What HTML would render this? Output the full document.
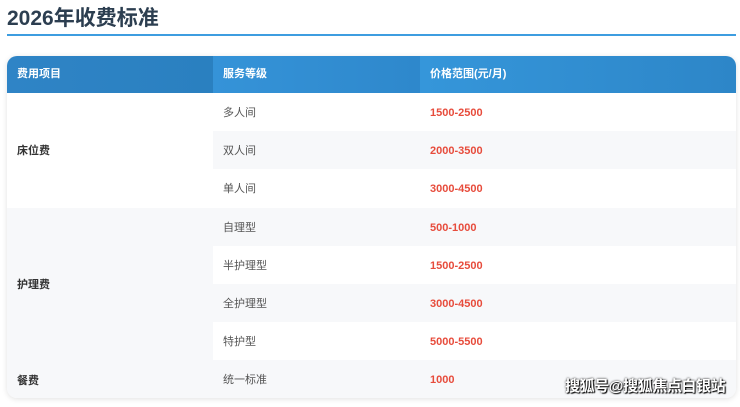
<!DOCTYPE html><html><head><meta charset="utf-8"><style>
body{margin:0;width:740px;height:407px;background:#fff;font-family:"Liberation Sans","Noto Sans CJK SC",sans-serif;position:relative;overflow:hidden}
.t{position:absolute;left:7px;top:2px;font-size:21px;font-weight:bold;color:#2c3e50}
.ln{position:absolute;left:7px;top:34px;width:729px;height:2px;background:#3d9de0}
.tb{position:absolute;left:7px;top:56px;width:729px;height:342px;border-radius:10px;overflow:hidden;box-shadow:0 1px 6px rgba(0,0,0,.12)}
.h{position:absolute;top:0;height:37px;color:#fff;font-size:11px;font-weight:bold;line-height:37px;padding-left:10px;box-sizing:border-box}
.c{position:absolute;height:38.2px;line-height:40px;font-size:11px;padding-left:10px;box-sizing:border-box;color:#555}
.g{background:#f7f8fa}
.w{background:#fff}
.p{color:#e74c3c;font-weight:bold}
.k{color:#333;font-weight:bold}
.wm{position:absolute;left:565px;top:375px;font-size:15px;color:#fff;text-shadow:0 0 2px #000,1px 1px 1px #000;font-weight:bold;letter-spacing:-0.4px}
</style></head><body>
<div class="t">2026年收费标准</div><div class="ln"></div>
<div class="tb">
<div class="h" style="left:0;width:206px;background:linear-gradient(90deg,#2f84c6,#2a80c0)">费用项目</div>
<div class="h" style="left:206px;width:207px;background:linear-gradient(90deg,#3593d8,#2e88cc)">服务等级</div>
<div class="h" style="left:413px;width:316px;background:linear-gradient(90deg,#3596da,#2d86c8)">价格范围(元/月)</div>
<div class="c w k" style="left:0;top:37px;width:206px;height:115px;line-height:117px">床位费</div>
<div class="c g k" style="left:0;top:152px;width:206px;height:153px;line-height:155px">护理费</div>
<div class="c g k" style="left:0;top:305px;width:206px;height:37px">餐费</div>
</div>
<div style="position:absolute;left:213px;top:93px;width:523px;height:305px;overflow:hidden;border-bottom-right-radius:10px">
<div class="c w" style="left:0;top:0;width:207px">多人间</div><div class="c w p" style="left:207px;top:0;width:316px">1500-2500</div>
<div class="c g" style="left:0;top:38.2px;width:207px">双人间</div><div class="c g p" style="left:207px;top:38.2px;width:316px">2000-3500</div>
<div class="c w" style="left:0;top:76.4px;width:207px">单人间</div><div class="c w p" style="left:207px;top:76.4px;width:316px">3000-4500</div>
<div class="c g" style="left:0;top:114.6px;width:207px">自理型</div><div class="c g p" style="left:207px;top:114.6px;width:316px">500-1000</div>
<div class="c w" style="left:0;top:152.8px;width:207px">半护理型</div><div class="c w p" style="left:207px;top:152.8px;width:316px">1500-2500</div>
<div class="c g" style="left:0;top:191px;width:207px">全护理型</div><div class="c g p" style="left:207px;top:191px;width:316px">3000-4500</div>
<div class="c w" style="left:0;top:229.2px;width:207px">特护型</div><div class="c w p" style="left:207px;top:229.2px;width:316px">5000-5500</div>
<div class="c g" style="left:0;top:267.4px;width:207px">统一标准</div><div class="c g p" style="left:207px;top:267.4px;width:316px">1000</div>
</div>
<div class="wm">搜狐号@搜狐焦点白银站</div>
</body></html>
